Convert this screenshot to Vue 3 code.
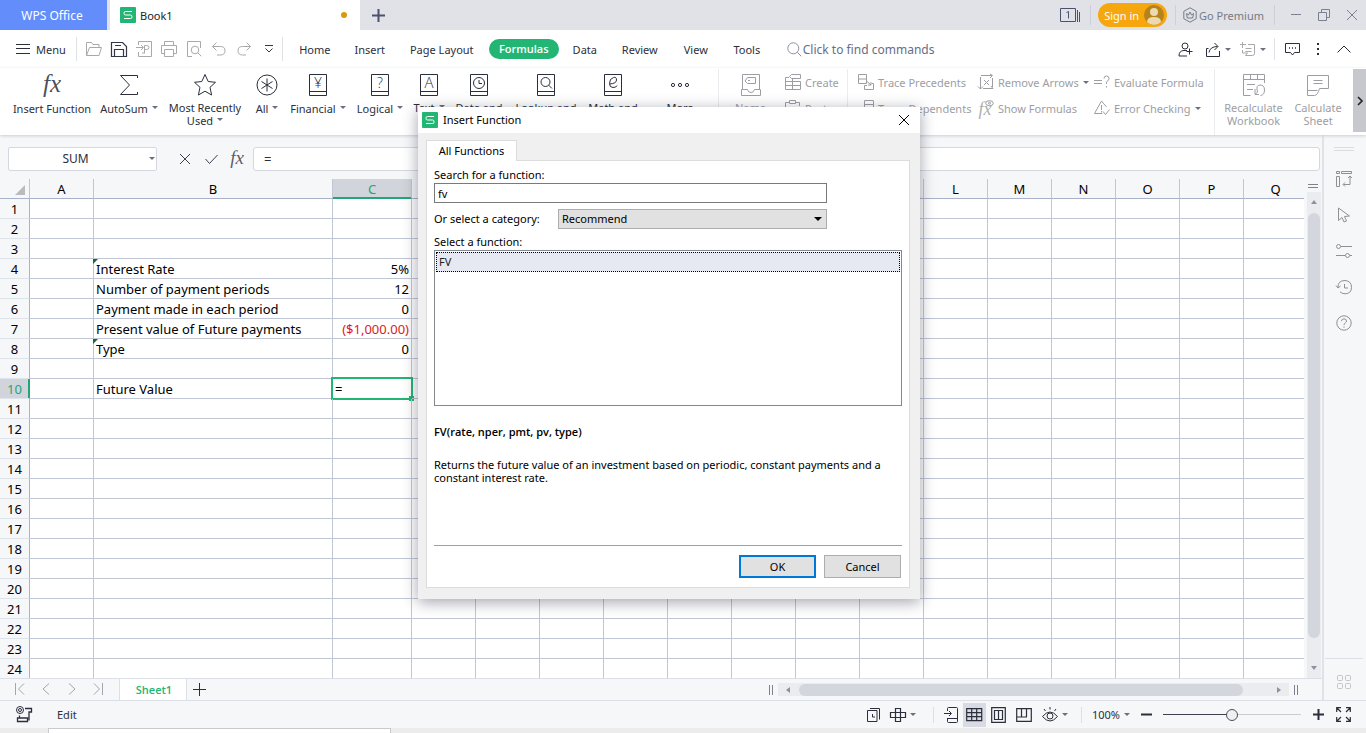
<script setup>
import { ref } from 'vue'

const box = '<path d="M2.500 1.500h17v21h-17zM2.500 18.500h17"/>'
const glyph = (c, size = 14) =>
  `<text x="11" y="15" text-anchor="middle" font-size="${size}" font-family="Open Sans, sans-serif" font-weight="300" fill="currentColor" stroke="none">${c}</text>`
const fx = (size, y, w) =>
  `<text x="${w}" y="${y}" text-anchor="middle" font-size="${size}" font-style="italic" font-family="Liberation Serif, serif" fill="currentColor" fill-opacity=".85" stroke="none">fx</text>`

const icons = {
  logo: [16, 16, '<rect width="16" height="16" rx="1" fill="#22b573" stroke="none"/><path d="M12 4.500H5.500q-1.500 0-1.500 1.500v.5q0 1.500 1.500 1.500h5q1.500 0 1.500 1.500v.5q0 1.500-1.500 1.500H4" stroke="#fff"/>'],
  plus: [13, 13, '<path d="M6.500 0v13M0 6.500h13" stroke-width="2"/>'],
  plusThin: [13, 13, '<path d="M6.500 0v13M0 6.500h13"/>'],
  windows: [20, 14, '<path d="M.5.500h15v13H.5zM17.500 2v12M19.500 4v10M6.500 4.500l2-1v7"/>'],
  user: [20, 20, '<circle cx="10" cy="10" r="10" fill="#b5821c" stroke="none"/><circle cx="10" cy="7" r="4" fill="#ecd9b0" stroke="none"/><path d="M3 17q0-5 7-5t7 5q-3 3-7 3t-7-3z" fill="#ecd9b0" stroke="none"/>'],
  premium: [16, 16, '<path d="M8 .8l6.200 3.500v7.400L8 15.200 1.800 11.700V4.300z"/><path d="M4.500 6.500l2 1.500L8 5l1.500 3 2-1.500-.8 4.500H5.300z"/>'],
  min: [12, 12, '<path d="M1 5.500h10"/>'],
  restore: [12, 12, '<path d="M.5 3.500h8v8h-8zM3.500 3V.500h8v8H9"/>'],
  close: [12, 12, '<path d="M1 1l10 10M11 1L1 11"/>'],
  menu: [14, 10, '<path d="M0 .500h14M0 4.500h14M0 9.500h14"/>'],
  open: [16, 14, '<path d="M.5 13.500V.500h5l1.500 2h6v3M.5 13.500l3-8h12l-2.500 8z"/>'],
  save: [16, 15, '<path d="M.5.500h11l4 4v10H.500zM3.500 14V7.500h9V14M4 3.500h6" stroke-width="1.200"/>'],
  export: [16, 16, '<path d="M2.500 4V.500h13v15h-13V11M0 6.500h7M5 4l2.500 2.500L5 9M8.500 12V4.500h2q2.500 0 2.500 2t-2.500 2h-2M6 12h3"/>'],
  print: [16, 16, '<path d="M3.500 4.500v-4h9v4M3.500 12.500h-3v-8h15v8h-3M3.500 8.500h9v7h-9z"/>'],
  preview: [16, 16, '<path d="M6 15.500H1.500V.500h13V7"/><circle cx="9" cy="9" r="3.800"/><path d="M11.800 11.800l3.500 3.500"/>'],
  undo: [14, 14, '<path d="M4.500.500l-4 4 4 4M.5 4.500h8q4.500 0 4.500 4.200T8.500 13H5"/>'],
  redo: [14, 14, '<path d="M9.500.500l4 4-4 4M13.500 4.500h-8Q1 4.500 1 8.700T5.500 13H9"/>'],
  more: [8, 8, '<path d="M0 .500h8M.5 3.500l3.500 3.500 3.500-3.500"/>'],
  search: [15, 15, '<circle cx="6.300" cy="6.300" r="5.500"/><path d="M10.300 10.300l4 4"/>'],
  share: [15, 15, '<circle cx="7" cy="4" r="3"/><path d="M9 8.500H6Q1 8.500 1 14h8M11.500 6.500v6M8.500 9.500h6"/>'],
  send: [16, 15, '<path d="M3.500 6.500h-2v8h13V9M4 10.500Q5 4.500 12.500 4.500M9.500 1l3.500 3.500L9.500 8"/>'],
  note: [16, 14, '<path d="M2.500 0v6M0 2.500h6M8 2.500h6.500v9q0 2-2 2h-7l2-2.500H2.500V8M5.500 6.500h6M5.500 9.500h6"/>'],
  comment: [15, 13, '<path d="M.5.500h14v9H9.500L7.500 12l-2-2.500h-5z"/><path d="M4 5h1M7 5h1M10 5h1" stroke-width="1.500"/>'],
  dots: [4, 14, '<path d="M2 1v2M2 6v2M2 11v2" stroke-width="2"/>'],
  up: [14, 8, '<path d="M.5 7.500L7 1l6.500 6.500"/>'],
  fx: [26, 24, fx(25, 19, 13)],
  sum: [22, 24, '<path d="M19.500 5V2.500h-17l9 9.500-9 9.500h17V19"/>'],
  star: [24, 24, '<path d="M12 1.500l3.200 7 7.300.8-5.500 5 1.600 7.700L12 18.200 5.400 22 7 14.300l-5.500-5 7.300-.8z"/>'],
  all: [22, 24, '<circle cx="11" cy="12" r="10"/><path d="M11 5.500v13M5.500 8.500l11 7M16.500 8.500l-11 7"/>'],
  yen: [22, 24, box + glyph('¥')],
  ask: [22, 24, box + glyph('?')],
  text: [22, 24, box + glyph('A', 15)],
  date: [22, 24, box + '<circle cx="11" cy="10" r="5.500"/><path d="M11 7v3.500h3"/>'],
  look: [22, 24, box + '<circle cx="10.500" cy="9" r="4.500"/><path d="M13.700 12.200l3.300 3.300"/>'],
  math: [22, 24, box + '<path d="M7.500 11q7-.5 7-4t-3-2.500q-4 1-4 6 0 4 3.500 4t4-2"/>'],
  dots3: [22, 24, '<circle cx="4" cy="12" r="1.600"/><circle cx="11" cy="12" r="1.600"/><circle cx="18" cy="12" r="1.600"/>'],
  name: [22, 24, '<path d="M2.500 16V1.500h17V16M1.500 16.500h6q.5 3 3.500 3t3.500-3h6v6h-19zM5 8l2.500-3.500h8v6h-8zM8 7.500h2"/>'],
  create: [16, 16, '<path d="M6.500.500h9v4h-9l-2-2zM4 3.500H.500v12h15v-8H.500M.5 11.500h15M7.500 5v10"/>'],
  paste: [16, 16, '<path d="M4 2.500H.500v13h6M4.500.500h6v3h-6zM11 2.500h3.500V6M7.500 7.500h8v8h-8z"/>'],
  prec: [16, 16, '<path d="M.5.500h8v9h-8zM.5 5h8M9 7.500l4 3.500M10 11h3V8M9 11.500H6.500v4h9v-6H14"/>'],
  dep: [16, 16, '<path d="M6.500.500h9v8h-9zM6.500 4.500h9M.5 10.500h6v5h-6z"/>'],
  arrows: [16, 16, '<path d="M2.500 15V3M0 12.500l2.500 2.500L5 12.500M3 1.500h11M12 0l2.500 1.500L12 4M5 14.500h10M13 12l2 2.500M14.500 4v9M6 6l5 5M11 6l-5 5"/>'],
  show: [16, 16, fx(18, 15, 7) + '<ellipse cx="11.500" cy="3.200" rx="3.800" ry="2.500" fill="#fff"/><circle cx="11.500" cy="3.200" r="1"/>'],
  evaluate: [16, 16, '<path d="M0 6.500h8M0 9.500h8M10 4.500q0-2.500 2.500-2.500T15 4.500q0 1.500-1.500 2.500t-1 3M12.500 12v1.500"/>'],
  error: [16, 16, '<path d="M12.500 7L7.500 1l-7 12.500h8M7.500 5v5M7.500 11v1.500M9 11.500l2.500 3 4-5"/>'],
  recalc: [24, 24, '<path d="M22.500 10V1.500h-21v21h7M1.500 6.500h21M8.500 2v4M15.500 2v4M5 11.500h8M5 16.500h6M13 16v5.500h4M13.500 21l2-2q-2-7 2.500-7t4.500 5-4 5.500"/>'],
  calc: [24, 24, '<path d="M1.500 18V2.500h21v13h-9q-2 7-5 7h-7v-5h10M7.500 7.500h9M7.500 10.500h9"/>'],
  next: [6, 10, '<path d="M1 1l4 4-4 4" stroke-width="1.600"/>'],
  check: [13, 12, '<path d="M.5 6l4 4.500L12.500 2"/>'],
  fxSmall: [18, 18, fx(19, 14, 9)],
  split: [10, 4, '<path d="M0 .500h10M0 3.500h10"/>'],
  bars: [4, 10, '<path d="M.5 0v10M3.500 0v10"/>'],
  first: [10, 12, '<path d="M.5 0v12M9 .500L3.500 6 9 11.500"/>'],
  prev: [8, 12, '<path d="M7 .500L1 6l6 5.500"/>'],
  nextThin: [8, 12, '<path d="M1 .500L7 6l-6 5.500"/>'],
  last: [10, 12, '<path d="M9.500 0v12M1 .500L6.500 6 1 11.500"/>'],
  macro: [17, 17, '<circle cx="4" cy="4" r="3.500"/><circle cx="4" cy="4" r="1.500"/><path d="M9 2.500h6.500V6H13v8.500M3.500 9.500V12h8v3.500h-10V12h2" stroke-width="1.300"/>'],
  sheets: [13, 14, '<path d="M.5 2.500h9.500v11H.500zM3 .500h9.500v11M5.500 6v3h2.500"/>'],
  target: [16, 14, '<path d="M5.500.500h5v13h-5zM.5 4.500h15v5H.500z" stroke-width="1.200"/>'],
  phone: [14, 16, '<path d="M3.500 4V1.500q0-1 1-1h8q1 0 1 1v13q0 1-1 1h-8q-1 0-1-1V11M0 6.500h7M5 4l2.500 2.500L5 9M4 11.500h9"/>'],
  gridView: [17, 14, '<path d="M.7.700h15v12h-15zM1 4.700h15M1 8.700h15M5.700 1v12M10.700 1v12" stroke-width="1.200"/>'],
  pageView: [15, 16, '<path d="M.7.700h13.600v14.600H.700zM3.500 3.500h8v9h-8zM7.500 3v10" stroke-width="1.200"/>'],
  breakView: [16, 14, '<path d="M.7.700h14.600v12.600H.700zM5.500 1v8M10.500 1v8M1 9h10" stroke-width="1.200"/>'],
  eye: [16, 15, '<path d="M.5 9.500q7.500-9 15 0-7.500 9-15 0z"/><circle cx="8" cy="9" r="3"/><path d="M8 0v2.500M2 2l1.500 2M14 2l-1.500 2"/>'],
  minus: [11, 3, '<path d="M0 1.500h11" stroke-width="2"/>'],
  plusBold: [11, 11, '<path d="M5.500 0v11M0 5.500h11" stroke-width="2"/>'],
  full: [15, 15, '<path d="M.7 5V.700H5M1 1l4 4M10 .700h4.300V5M14 1l-4 4M.7 10v4.300H5M1 14l4-4M14.300 10v4.300H10M14 14l-4-4" stroke-width="1.200"/>'],
  fields: [16, 16, '<path d="M.5.500h3v2h-3zM5.500.500h10v2h-10zM.5 5.500h3v10h-3zM12 7l2-2 2 2M14 5.500v8H7.500M9 11.500l-2 2 2 2"/>'],
  cursor: [14, 16, '<path d="M1.500 1v12.500l3.500-3 2 4.500 2.500-1-2-4.500 5-.5z"/>'],
  sliders: [16, 14, '<circle cx="2.500" cy="2.500" r="2"/><path d="M5 2.500h11"/><circle cx="11.500" cy="11.500" r="2"/><path d="M0 11.500h9.500M14 11.500h2"/>'],
  history: [16, 16, '<path d="M2 9Q1.500 1.500 9 1.500q6.500.5 6.500 6.800T9 14.800q-3 0-5-2M0 6.500L2 9l2.500-2M8.500 5v4H12"/>'],
  help: [16, 16, '<circle cx="8" cy="8" r="7.200"/><path d="M5.500 6.200q0-2.400 2.500-2.400t2.500 2.200q0 1.200-1.300 2T8 10M8 11.300v1.400"/>'],
  apps: [14, 14, '<rect x=".5" y=".5" width="5" height="5" rx="1"/><rect x="8.500" y=".5" width="5" height="5" rx="1"/><rect x=".5" y="8.500" width="5" height="5" rx="1"/><rect x="8.500" y="8.500" width="5" height="5" rx="1"/>']
}
const svg = (name) => {
  const [w, h, body] = icons[name]
  return {
    width: w,
    height: h,
    viewBox: `0 0 ${w} ${h}`,
    fill: 'none',
    stroke: 'currentColor',
    'aria-hidden': true,
    innerHTML: body
  }
}

const quick = [
  { icon: 'open', label: 'Open' },
  { icon: 'save', label: 'Save', on: true },
  { icon: 'export', label: 'Export to PDF' },
  { icon: 'print', label: 'Print' },
  { icon: 'preview', label: 'Print preview' },
  { icon: 'undo', label: 'Undo' },
  { icon: 'redo', label: 'Redo' },
  { icon: 'more', label: 'Customize', on: true }
]
const tabs = ['Home', 'Insert', 'Page Layout', 'Formulas', 'Data', 'Review', 'View', 'Tools']
const tools = [
  { icon: 'fx', lines: ['Insert Function'] },
  { icon: 'sum', lines: ['AutoSum'], drop: true },
  { icon: 'star', lines: ['Most Recently', 'Used'], drop: true, tall: true },
  { icon: 'all', lines: ['All'], drop: true },
  { icon: 'yen', lines: ['Financial'], drop: true },
  { icon: 'ask', lines: ['Logical'], drop: true },
  { icon: 'text', lines: ['Text'], drop: true, tall: true },
  { icon: 'date', lines: ['Date and'], tall: true },
  { icon: 'look', lines: ['Lookup and'], tall: true },
  { icon: 'math', lines: ['Math and'], tall: true },
  { icon: 'dots3', lines: ['More'], tall: true }
]
const stacks = [
  [{ icon: 'create', label: 'Create' }, { icon: 'paste', label: 'Paste' }],
  [{ icon: 'prec', label: 'Trace Precedents' }, { icon: 'dep', label: 'Trace Dependents' }],
  [{ icon: 'arrows', label: 'Remove Arrows', drop: true }, { icon: 'show', label: 'Show Formulas' }],
  [{ icon: 'evaluate', label: 'Evaluate Formula' }, { icon: 'error', label: 'Error Checking', drop: true }]
]
const columns = 'ABCDEFGHIJKLMNOPQ'.split('')
const cells = {
  B4: { v: 'Interest Rate', mark: true }, C4: { v: '5%', right: true },
  B5: { v: 'Number of payment periods' }, C5: { v: '12', right: true },
  B6: { v: 'Payment made in each period' }, C6: { v: '0', right: true },
  B7: { v: 'Present value of Future payments' }, C7: { v: '($1,000.00)', right: true, red: true },
  B8: { v: 'Type', mark: true }, C8: { v: '0', right: true },
  B10: { v: 'Future Value' }, C10: { v: '=', active: true }
}
const side = ['fields', 'cursor', 'sliders', 'history', 'help']
const name = ref('SUM')
const formula = ref('=')
const query = ref('fv')
const zoom = ref(100)
</script>

<template>
  <div class="app">
    <header class="title">
      <button class="home">WPS Office</button>
      <div class="doc"><svg v-bind="svg('logo')" /><span>Book1</span><i class="unsaved"></i></div>
      <button class="add" aria-label="New tab"><svg v-bind="svg('plus')" /></button>
      <div class="account">
        <button class="wins" aria-label="Windows"><svg v-bind="svg('windows')" /></button>
        <button class="signin">Sign in<svg v-bind="svg('user')" /></button>
        <button class="premium"><svg v-bind="svg('premium')" />Go Premium</button>
        <button class="win" aria-label="Minimize"><svg v-bind="svg('min')" /></button>
        <button class="win" aria-label="Restore"><svg v-bind="svg('restore')" /></button>
        <button class="win" aria-label="Close"><svg v-bind="svg('close')" /></button>
      </div>
    </header>

    <nav class="menubar">
      <button class="menu"><svg v-bind="svg('menu')" />Menu</button>
      <div class="quick">
        <button v-for="q in quick" :key="q.icon" :class="{ on: q.on }" :aria-label="q.label"><svg v-bind="svg(q.icon)" /></button>
      </div>
      <div class="tabs">
        <button v-for="t in tabs" :key="t" :class="{ current: t === 'Formulas' }"><span>{{ t }}</span></button>
      </div>
      <label class="find"><svg v-bind="svg('search')" /><input type="text" placeholder="Click to find commands" aria-label="Find commands" /></label>
      <div class="actions">
        <button aria-label="Share"><svg v-bind="svg('share')" /></button>
        <button aria-label="Send"><svg v-bind="svg('send')" /><i class="caret"></i></button>
        <button class="dim" aria-label="Notes"><svg v-bind="svg('note')" /><i class="caret"></i></button>
        <button class="ruled" aria-label="Comments"><svg v-bind="svg('comment')" /></button>
        <button class="slim" aria-label="Options"><svg v-bind="svg('dots')" /></button>
        <button class="slim" aria-label="Collapse ribbon"><svg v-bind="svg('up')" /></button>
      </div>
    </nav>

    <section class="ribbon">
      <button v-for="t in tools" :key="t.icon" class="tool" :class="{ tall: t.tall }">
        <svg v-bind="svg(t.icon)" />
        <span v-for="(l, i) in t.lines" :key="l">{{ l }}<i v-if="t.drop && i === t.lines.length - 1" class="caret"></i></span>
      </button>
      <button class="tool tall off ruled"><svg v-bind="svg('name')" /><span>Name</span></button>
      <div v-for="(s, i) in stacks" :key="i" class="stack" :class="{ ruled: i === 1 }">
        <button v-for="b in s" :key="b.label"><svg v-bind="svg(b.icon)" />{{ b.label }}<i v-if="b.drop" class="caret"></i></button>
      </div>
      <button class="tool tall off ruled"><svg v-bind="svg('recalc')" /><span>Recalculate</span><span>Workbook</span></button>
      <button class="tool tall off"><svg v-bind="svg('calc')" /><span>Calculate</span><span>Sheet</span></button>
      <button class="scroll" aria-label="Scroll ribbon"><svg v-bind="svg('next')" /></button>
    </section>

    <div class="work">
      <main class="book">
        <div class="formula">
          <div class="namebox"><input v-model="name" aria-label="Name box" /><i class="caret"></i></div>
          <div class="fbtns">
            <button aria-label="Cancel entry"><svg v-bind="svg('close')" /></button>
            <button aria-label="Accept entry"><svg v-bind="svg('check')" /></button>
            <button aria-label="Insert function"><svg v-bind="svg('fxSmall')" /></button>
          </div>
          <input v-model="formula" class="fx" aria-label="Formula" />
        </div>
        <div class="sheetwrap">
          <div class="sheet">
            <table>
              <colgroup>
                <col class="c-row" /><col class="c-std" /><col class="c-b" /><col class="c-c" />
                <col v-for="n in 14" :key="n" class="c-std" />
              </colgroup>
              <thead>
                <tr>
                  <th class="corner"><i></i></th>
                  <th v-for="c in columns" :key="c" :class="{ sel: c === 'C' }">{{ c }}</th>
                </tr>
              </thead>
              <tbody>
                <tr v-for="r in 24" :key="r">
                  <th :class="{ sel: r === 10 }">{{ r }}</th>
                  <td v-for="c in columns" :key="c" :class="cells[c + r]">{{ cells[c + r]?.v }}</td>
                </tr>
              </tbody>
            </table>
          </div>
          <div class="vbar">
            <svg v-bind="svg('split')" />
            <div class="track"><i class="tri up"></i><b></b><i class="tri down"></i></div>
          </div>
        </div>
        <div class="sheetbar">
          <div class="navs">
            <button aria-label="First sheet"><svg v-bind="svg('first')" /></button>
            <button aria-label="Previous sheet"><svg v-bind="svg('prev')" /></button>
            <button aria-label="Next sheet"><svg v-bind="svg('nextThin')" /></button>
            <button aria-label="Last sheet"><svg v-bind="svg('last')" /></button>
          </div>
          <button class="sheettab">Sheet1</button>
          <button class="newsheet" aria-label="Add sheet"><svg v-bind="svg('plusThin')" /></button>
          <div class="hbar">
            <svg v-bind="svg('bars')" />
            <div class="track"><i class="tri left"></i><b></b><i class="tri right"></i></div>
            <svg v-bind="svg('bars')" />
          </div>
        </div>
      </main>
      <aside class="side">
        <i class="grip"></i>
        <button v-for="s in side" :key="s" :aria-label="s"><svg v-bind="svg(s)" /></button>
        <button class="apps" aria-label="Apps"><svg v-bind="svg('apps')" /></button>
      </aside>
    </div>

    <footer class="status">
      <svg v-bind="svg('macro')" />
      <span class="mode">Edit</span>
      <div class="views">
        <button aria-label="Sheet list"><svg v-bind="svg('sheets')" /></button>
        <button aria-label="Crosshair"><svg v-bind="svg('target')" /><i class="caret"></i></button>
        <button class="ruled" aria-label="Phone"><svg v-bind="svg('phone')" /></button>
        <button class="picked" aria-label="Normal view"><svg v-bind="svg('gridView')" /></button>
        <button aria-label="Page layout view"><svg v-bind="svg('pageView')" /></button>
        <button aria-label="Page break view"><svg v-bind="svg('breakView')" /></button>
        <button aria-label="Reading mode"><svg v-bind="svg('eye')" /><i class="caret"></i></button>
        <button class="ruled pct">{{ zoom }}%<i class="caret"></i></button>
        <button aria-label="Zoom out"><svg v-bind="svg('minus')" /></button>
        <input v-model="zoom" type="range" min="0" max="200" aria-label="Zoom" />
        <button class="more" aria-label="Zoom in"><svg v-bind="svg('plusBold')" /></button>
        <button aria-label="Full screen"><svg v-bind="svg('full')" /></button>
      </div>
    </footer>
    <div class="under"><i></i></div>

    <section class="dialog" role="dialog" aria-label="Insert Function">
      <header><svg v-bind="svg('logo')" /><span>Insert Function</span><button aria-label="Close dialog"><svg v-bind="svg('close')" /></button></header>
      <div class="dbody">
        <button class="dtab">All Functions</button>
        <form class="panel" @submit.prevent>
          <label for="q">Search for a function:</label>
          <input id="q" v-model="query" type="text" />
          <div class="cat">
            <label for="cat">Or select a category:</label>
            <div class="pick"><select id="cat"><option>Recommend</option></select><i></i></div>
          </div>
          <span id="fnl">Select a function:</span>
          <ul role="listbox" aria-labelledby="fnl"><li role="option" aria-selected="true">FV</li></ul>
          <strong>FV(rate, nper, pmt, pv, type)</strong>
          <p>Returns the future value of an investment based on periodic, constant payments and a constant interest rate.</p>
          <div class="btns"><button class="ok">OK</button><button type="button">Cancel</button></div>
        </form>
      </div>
    </section>
  </div>
</template>

<style>
html, body { margin: 0; overflow: hidden; }
</style>

<style scoped>
* { box-sizing: border-box; }
.app {
  position: relative;
  display: flex;
  flex-direction: column;
  height: 100vh;
  overflow: hidden;
  font: 11px/13px "Noto Sans", "Open Sans", sans-serif;
  color: #2b2f3c;
  background: #f6f7f9;
}
button {
  display: flex;
  align-items: center;
  justify-content: center;
  padding: 0;
  border: 0;
  background: none;
  font: inherit;
  color: inherit;
  white-space: nowrap;
}
input, select { font: inherit; color: inherit; min-width: 0; margin: 0; }
svg { display: block; flex: none; overflow: visible; }
.caret {
  display: inline-block;
  flex: none;
  border: 3px solid transparent;
  border-top-color: #6b7080;
  border-bottom: 0;
  margin-left: 4px;
}

.title { display: flex; flex: none; height: 30px; background: #e0e2e7; color: #454b60; }
.home { width: 107px; background: #628dfb; color: #fff; font-size: 12px; padding-right: 3px; }
.doc { display: flex; align-items: center; width: 250px; margin-left: 3px; padding: 0 13px 0 10px; gap: 4px; background: #fff; color: #20242e; }
.unsaved { width: 6px; height: 6px; margin-left: auto; border-radius: 50%; background: #d79a08; }
.add { width: 36px; color: #4a5270; }
.account { display: flex; align-items: center; margin-left: auto; color: #7b8091; }
.wins { padding-right: 10px; height: 20px; border-right: 1px solid #cdd0d7; color: #4a5270; }
.signin { gap: 5px; height: 24px; margin: 0 8px 0 7px; padding: 0 3px 0 6px; border-radius: 12px; background: #f5a70d; color: #fff; }
.premium { gap: 1px; height: 20px; padding: 0 10px 0 6px; border: solid #cdd0d7; border-width: 0 1px; color: #777b85; }
.win { width: 28px; height: 30px; }
.account .premium + .win { margin-left: 7px; }

.menubar { display: flex; flex: none; align-items: center; height: 38px; background: #fff; }
.menu { gap: 6px; height: 24px; padding: 0 10px 0 16px; border-right: 1px solid #dfe1e5; }
.quick { display: flex; height: 24px; padding-left: 5px; border-right: 1px solid #dfe1e5; color: #a8a9ad; }
.quick button { width: 25px; }
.quick .on { color: #343846; }
.tabs { display: grid; grid-template-columns: 56px 54px 90px 74px 48px 62px 50px 52px; margin-left: 4px; }
.tabs .current { color: #fff; font: 600 11px/13px "Open Sans", sans-serif; }
.tabs .current span { padding: 3px 10px 4px; border-radius: 10px; background: #22b573; }
.find { display: flex; align-items: center; gap: 1px; margin-left: 14px; color: #8b92a5; }
.find input { width: 160px; padding: 0; border: 0; font-size: 12px; }
.find input::placeholder { color: #666e86; opacity: 1; }
.actions { display: flex; align-items: center; margin-left: auto; padding-right: 9px; }
.actions button { height: 22px; padding: 0 6px; }
.actions .slim { width: 26px; padding: 0; }
.actions .ruled { padding: 0 5px 0 10px; border-left: 1px solid #dfe1e5; }
.actions .dim { color: #a8a9ad; padding: 0 8px 0 3px; }

.ribbon {
  display: grid;
  grid-template-columns: 92px 62px 90px 34px 68px 56px 42px 58px 76px 58px 76px 64px 65px 128px 116px 1fr 78px 52px 22px;
  flex: none;
  height: 67px;
  padding: 1px 0 0 6px;
  background: #fff;
  position: relative;
  box-shadow: 0 1px 3px #c9ccd4;
  z-index: 1;
}
.tool { flex-direction: column; justify-content: flex-start; padding-top: 4px; }
.tool svg { margin-bottom: 5px; }
.tool.tall svg { margin-bottom: 4px; }
.tool .caret { margin-bottom: 4px; }
.off, .stack { color: #9d9ea3; }
.ribbon .ruled { border-left: 1px solid #ebecef; }
.stack { display: grid; grid-template-rows: 26px 26px; }
.stack button { justify-content: flex-start; gap: 4px; padding-left: 3px; }
.stack.ruled { padding-left: 7px; }
.stack .caret { margin-left: 0; }
.scroll { justify-self: end; width: 13px; height: 63px; background: #c7c8ce; color: #222; }

.work { display: flex; flex: 1; min-height: 0; }
.book { display: flex; flex: 1; flex-direction: column; min-width: 0; }
.formula { display: flex; flex: none; align-items: center; height: 44px; padding: 3px 2px 0 8px; }
.namebox { position: relative; width: 149px; }
.namebox input { width: 100%; height: 24px; padding: 0 14px 0 0; border: 1px solid #d5d8df; border-radius: 2px; background: #fff; text-align: center; font-size: 12px; }
.namebox .caret { position: absolute; right: 2px; top: 10px; }
.fbtns { display: flex; padding: 0 3px 0 15px; color: #3c4150; }
.fbtns button { width: 26px; }
.fx { flex: 1; height: 24px; padding: 0 10px; border: 1px solid #d5d8df; border-radius: 3px; background: #fff; font-size: 13px; }

.sheetwrap { display: flex; flex: 1; min-height: 0; }
.sheet { flex: 1; min-width: 0; overflow: hidden; background: #fff; }
table { width: 1308px; table-layout: fixed; border-collapse: separate; border-spacing: 0; font-size: 13px; color: #000; }
.c-row { width: 30px; }
.c-std { width: 64px; }
.c-b { width: 239px; }
.c-c { width: 79px; }
th, td { height: 20px; padding: 2px 0 0; border: solid #c0c6d6; border-width: 0 1px 1px 0; line-height: 17px; white-space: nowrap; }
th { background: #f6f7f9; font-weight: 400; border-right-color: #a9b2c8; }
thead th { border-bottom-color: #a9b2c8; border-right-color: #c0c6d6; padding: 1px 0 0; line-height: 17px; }
tbody th { border-bottom-color: #dfe3ea; }
.corner i { display: block; margin: 2px 4px 0 auto; width: 0; border: 5px solid #b9bbc0; border-top-color: transparent; border-left-color: transparent; }
thead .sel { background: #d2d4db; color: #22a673; box-shadow: inset 0 -1px #22a673; border-bottom-color: #22a673; }
tbody .sel { background: #d2d4db; color: #22a673; box-shadow: inset -1px 0 #22a673; border-right-color: #22a673; }
td { position: relative; padding: 2px 2px 0; text-align: left; }
.right { text-align: right; }
.red { color: #e01a1a; }
.mark::before { content: ""; position: absolute; left: -1px; top: 0; border: solid #17692f; border-width: 5px 5px 0 0; border-right-color: transparent; }
.active::before { content: ""; position: absolute; inset: -2px; border: 2px solid #22b573; }
.active::after { content: ""; position: absolute; right: -3px; bottom: -3px; width: 5px; height: 5px; background: #22b573; }

.vbar { display: flex; flex-direction: column; align-items: center; width: 18px; padding: 5px 0 0; gap: 4px; color: #7d8190; }
.vbar .track { display: flex; flex: 1; flex-direction: column; align-items: center; width: 14px; padding: 8px 0; background: #ebecf0; margin-left: 2px; }
.track b { flex: 1; border-radius: 6px; background: #d3d6dd; }
.vbar b { width: 12px; margin: 9px 0 28px; }
.tri { border: 3px solid transparent; }
.tri.up { border-top: 0; border-bottom: 4px solid #8e92a0; }
.tri.down { border-bottom: 0; border-top: 4px solid #8e92a0; }
.tri.left { border-left: 0; border-right: 4px solid #8e92a0; }
.tri.right { border-right: 0; border-left: 4px solid #8e92a0; }

.sheetbar { display: flex; flex: none; height: 22px; border-top: 1px solid #dcdfe5; }
.navs { display: flex; align-items: center; padding-left: 7px; width: 119px; height: 20px; color: #a3a6ae; }
.navs button { width: 26px; }
.sheettab { width: 68px; padding: 0 0 0 2px; border: solid #dcdfe5; border-width: 0 1px; background: #fff; color: #22b573; font: 600 11px/13px "Open Sans", sans-serif; }
.newsheet { width: 24px; }
.hbar { display: flex; align-items: center; width: 42%; margin-left: auto; padding: 0 24px 0 2px; gap: 5px; color: #7d8190; }
.hbar .track { display: flex; flex: 1; align-items: center; height: 13px; padding: 0 8px; background: #ebecf0; }
.hbar b { height: 12px; margin: 0 34px 0 9px; }

.side { display: flex; flex-direction: column; align-items: center; width: 44px; padding: 12px 2px 0 0; border-left: 2px solid #e0e2e8; color: #8f9094; }
.grip { width: 20px; height: 4px; border: solid #dadce1; border-width: 1px 0; margin-bottom: 10px; }
.side button { width: 28px; height: 36px; }
.side .apps { margin-top: auto; height: 42px; padding-top: 4px; border-top: 1px solid #dcdfe5; width: 38px; color: #c2c4ca; }

.status { display: flex; flex: none; align-items: center; height: 28px; padding: 0 10px 0 16px; border-top: 1px solid #dcdfe5; }
.mode { margin-left: 24px; }
.views { display: flex; align-items: center; margin-left: auto; }
.views button { height: 24px; padding: 0 5px; }
.views .ruled { position: relative; margin-left: 8px; padding-left: 15px; }
.views .ruled::before { content: ""; position: absolute; left: 4px; top: 4px; height: 16px; border-left: 1px solid #dcdfe5; }
.views .pct { margin-left: 4px; padding-right: 6px; }
.views .more { padding-right: 7px; }
.views .picked { padding: 0 3px; background: #d8dbe3; }
.views input { width: 138px; height: 16px; margin: 0 7px 0 6px; appearance: none; background: linear-gradient(90deg, #3d4250 50%, #c9ccd3 50%) center / 100% 1px no-repeat; }
.views input::-webkit-slider-thumb { appearance: none; width: 12px; height: 12px; border: 1px solid #4c505c; border-radius: 50%; background: #f0f0f1; }
.under { flex: none; height: 5px; padding-left: 48px; background: #ececed; }
.under i { display: block; width: 26%; height: 5px; border: 1px solid #c9cacd; border-bottom: 0; background: #fff; }

.dialog { position: absolute; left: 418px; top: 107px; z-index: 2; width: 502px; background: #f0f0f0; color: #000; box-shadow: 0 3px 14px rgba(30, 34, 60, .42); }
.dialog header { display: flex; align-items: center; height: 26px; padding: 0 4px; gap: 5px; background: #fff; }
.dialog header span { padding-bottom: 2px; }
.dialog header button { margin-left: auto; width: 24px; height: 24px; }
.dbody { padding: 7px 10px 11px 8px; }
.dtab { position: relative; width: 91px; height: 21px; padding-bottom: 1px; border: 1px solid #dcdcdc; border-bottom: 0; margin-bottom: -1px; background: #fff; }
.panel { display: flex; flex-direction: column; padding: 7px 7px 9px; border: 1px solid #dcdcdc; background: #fff; }
.panel #q { width: 393px; height: 20px; margin: 2px 0 6px; padding: 1px 3px 0; border: 1px solid #7a7a7a; }
.cat { display: flex; align-items: center; margin-bottom: 6px; }
.cat label { width: 124px; padding-bottom: 2px; }
.pick { position: relative; width: 269px; }
.pick select { display: block; width: 100%; height: 20px; padding: 0 3px 2px; border: 1px solid #adadad; border-radius: 0; background: #e1e1e1; appearance: none; }
.pick i { position: absolute; right: 5px; top: 8px; border: solid transparent; border-width: 4px 4px 0; border-top-color: #000; }
.panel ul { height: 156px; margin: 2px 0 19px; padding: 1px; border: 1px solid #828790; list-style: none; }
.panel li { height: 20px; padding: 3px 2px; border: 1px dotted #000; background: #e6e9f2; line-height: 12px; color: #222; }
.panel strong { font: 600 11px/13px "Open Sans", sans-serif; }
.panel p { height: 88px; margin: 20px 0 9px; border-bottom: 1px solid #a0a0a0; }
.btns { display: flex; justify-content: flex-end; gap: 8px; padding-right: 1px; }
.btns button { width: 77px; height: 23px; border: 1px solid #adadad; background: #e1e1e1; }
.btns .ok { border: 2px solid #0078d7; }
</style>
